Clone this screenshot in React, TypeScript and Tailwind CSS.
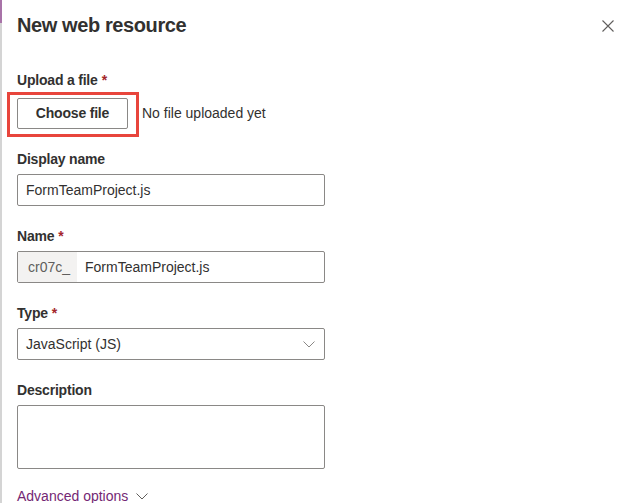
import React from 'react';

const font = { fontFamily: '"Liberation Sans", Arial, sans-serif' };

const Label = ({ text, required }: { text: string; required?: boolean }) => (
  <div className="h-[30px] shrink-0 flex items-center text-[14px] font-semibold tracking-[-0.2px] text-[#323130]">
    {text}
    {required && <span className="ml-1 text-[#a4262c]">*</span>}
  </div>
);

const Chevron = ({ className }: { className?: string }) => (
  <svg width="12" height="7" viewBox="0 0 12 7" className={className}>
    <path d="M0.5 0.5 L6 6 L11.5 0.5" fill="none" stroke="currentColor" strokeWidth="1" />
  </svg>
);

export default function App() {
  return (
    <div className="w-[641px] h-[503px] bg-white overflow-hidden flex" style={font}>
      {/* left edge of the page behind the panel */}
      <div className="w-[2px] flex flex-col">
        <div className="h-[23px] bg-[#a873a8]" />
        <div className="flex-1 bg-[#d4d4d4]" />
      </div>

      <div className="flex-1 flex flex-col pl-[15px]">
        {/* Header */}
        <div className="h-[52px] shrink-0 pt-[10px] flex items-start justify-between">
          <h1 className="text-[20px] leading-[30px] font-semibold tracking-[-0.4px] text-[#323130]">New web resource</h1>
          <button className="mr-[27px] mt-[10px] text-[#605e5c]">
            <svg width="12" height="12" viewBox="0 0 12 12">
              <path d="M0.5 0.5 L11.5 11.5 M11.5 0.5 L0.5 11.5" stroke="currentColor" strokeWidth="1.1" />
            </svg>
          </button>
        </div>

        <div className="w-[308px] shrink-0 flex flex-col">
          {/* Upload a file */}
          <div className="mt-[13px]">
            <Label text="Upload a file" required />
            <div className="mt-[3px] flex items-center">
              <div className="relative">
                <button className="w-[111px] h-[31px] border border-[#8a8886] rounded-[2px] bg-white text-[14px] font-semibold tracking-[-0.2px] text-[#323130]">
                  Choose file
                </button>
                <div className="absolute left-[-10px] top-[-6px] w-[132px] h-[45px] border-[3px] border-[#e8453c]" />
              </div>
              <span className="ml-[14px] text-[14px] text-[#323130]">No file uploaded yet</span>
            </div>
          </div>

          {/* Display name */}
          <div className="mt-[15px]">
            <Label text="Display name" />
            <div className="h-[32px] border border-[#8a8886] rounded-[2px] flex items-center px-[8px] text-[14px] text-[#323130]">
              FormTeamProject.js
            </div>
          </div>

          {/* Name */}
          <div className="mt-[15px]">
            <Label text="Name" required />
            <div className="h-[32px] border border-[#8a8886] rounded-[2px] flex items-stretch text-[14px]">
              <div className="w-[59px] bg-[#f3f2f1] text-[#605e5c] flex items-center pl-[10px]">cr07c_</div>
              <div className="flex items-center pl-[8px] text-[#323130]">FormTeamProject.js</div>
            </div>
          </div>

          {/* Type */}
          <div className="mt-[15px]">
            <Label text="Type" required />
            <div className="h-[32px] border border-[#8a8886] rounded-[2px] flex items-center justify-between pl-[8px] pr-[9px] text-[14px] text-[#323130]">
              <span>JavaScript (JS)</span>
              <Chevron className="text-[#8a8886]" />
            </div>
          </div>

          {/* Description */}
          <div className="mt-[15px]">
            <Label text="Description" />
            <div className="h-[64px] border border-[#8a8886] rounded-[2px]" />
          </div>

          {/* Advanced options */}
          <div className="mt-[17px] flex items-center text-[14px] text-[#742774]">
            <span>Advanced options</span>
            <Chevron className="ml-[8px] text-[#605e5c]" />
          </div>
        </div>
      </div>
    </div>
  );
}
